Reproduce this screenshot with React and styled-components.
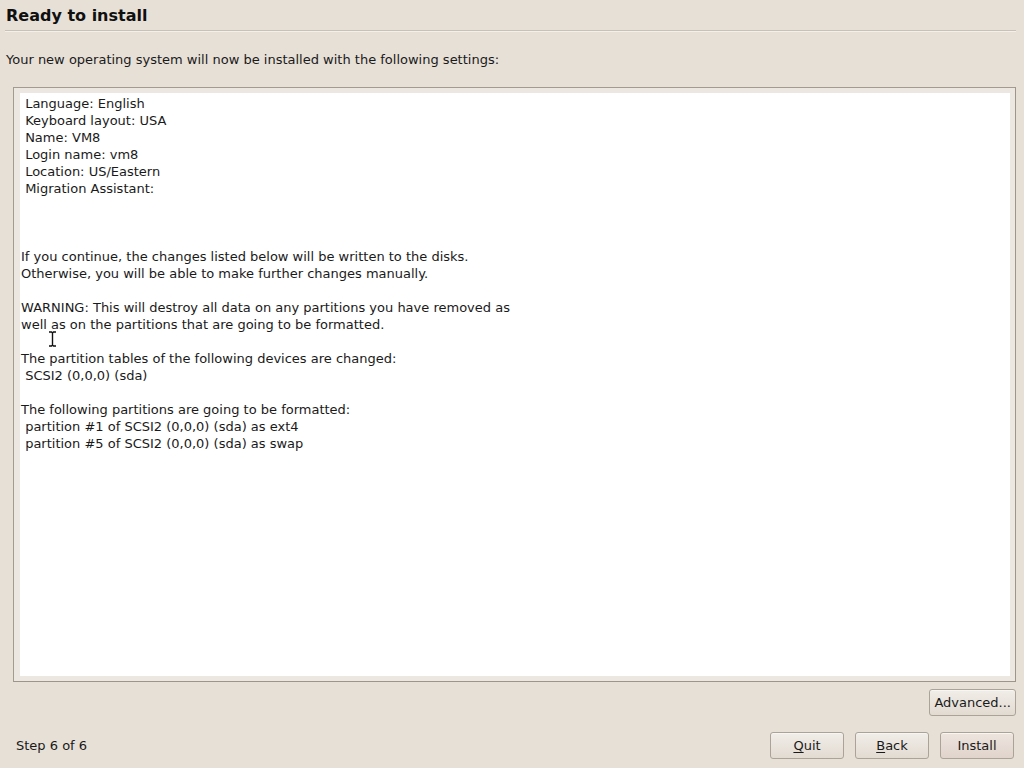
import React from "react";
import styled, { createGlobalStyle } from "styled-components";

const GlobalStyle = createGlobalStyle`
  html, body {
    margin: 0;
    padding: 0;
    background: #e7e0d7;
  }
  body {
    font-family: "DejaVu Sans", "Liberation Sans", sans-serif;
    color: #1a1a1a;
  }
`;

const Window = styled.div`
  width: 1024px;
  height: 768px;
  box-sizing: border-box;
  background: #e7e0d7;
  display: flex;
  flex-direction: column;
  position: relative;
  overflow: hidden;
`;

const Header = styled.div`
  margin: 0 8px 0 5px;
  padding: 7px 0 5px 1px;
  border-bottom: 1px solid #c9c1b6;
  box-shadow: 0 1px 0 #f3efea;
`;

const Title = styled.h1`
  margin: 0;
  font-size: 16px;
  font-weight: bold;
  line-height: 18px;
  color: #101010;
`;

const Intro = styled.p`
  margin: 20px 0 0 6px;
  font-size: 13px;
  line-height: 17px;
`;

const Frame = styled.div`
  margin: 19px 8px 0 13px;
  height: 595px;
  box-sizing: border-box;
  border: 1px solid #a49b90;
  border-right-color: #9d948a;
  border-bottom-color: #9d948a;
  padding: 5px 5px 5px 6px;
  background: #ece7e1;
  display: flex;
`;

const TextArea = styled.div`
  flex: 1;
  background: #ffffff;
  padding: 2px 1px;
  font-size: 13px;
  line-height: 17px;
  white-space: pre;
  color: #1a1a1a;
`;

const ButtonRow = styled.div`
  display: flex;
  align-items: center;
  justify-content: ${(p) => (p.$spread ? "space-between" : "flex-end")};
  padding: ${(p) => p.$pad};
`;

const Buttons = styled.div`
  display: flex;
  gap: 11px;
`;

const Button = styled.button`
  font-family: "DejaVu Sans", "Liberation Sans", sans-serif;
  font-size: 13px;
  color: #1a1a1a;
  height: 27px;
  min-width: ${(p) => p.$w || 74}px;
  padding: 0 4px;
  border: 1px solid #aba398;
  border-radius: 3px;
  background: ${(p) =>
    p.$default
      ? "linear-gradient(#eee5df, #e0d4cc)"
      : "linear-gradient(#f1ede8, #e2dbd2)"};
  box-shadow: inset 0 1px 0 #f8f6f3;
  cursor: default;
`;

const Mnemonic = styled.span`
  text-decoration: underline;
  text-underline-offset: 2px;
`;

const StepLabel = styled.span`
  font-size: 13px;
  line-height: 17px;
`;

const Cursor = styled.svg`
  position: absolute;
  left: 48px;
  top: 331px;
`;

const summary = ` Language: English
 Keyboard layout: USA
 Name: VM8
 Login name: vm8
 Location: US/Eastern
 Migration Assistant:



If you continue, the changes listed below will be written to the disks.
Otherwise, you will be able to make further changes manually.

WARNING: This will destroy all data on any partitions you have removed as
well as on the partitions that are going to be formatted.

The partition tables of the following devices are changed:
 SCSI2 (0,0,0) (sda)

The following partitions are going to be formatted:
 partition #1 of SCSI2 (0,0,0) (sda) as ext4
 partition #5 of SCSI2 (0,0,0) (sda) as swap`;

export default function App() {
  return (
    <Window>
      <GlobalStyle />
      <Header>
        <Title>Ready to install</Title>
      </Header>
      <Intro>
        Your new operating system will now be installed with the following
        settings:
      </Intro>
      <Frame>
        <TextArea>{summary}</TextArea>
      </Frame>
      <ButtonRow $pad="7px 8px 0 0">
        <Button $w={86}>Advanced...</Button>
      </ButtonRow>
      <ButtonRow $spread $pad="16px 10px 0 16px">
        <StepLabel>Step 6 of 6</StepLabel>
        <Buttons>
          <Button>
            <Mnemonic>Q</Mnemonic>uit
          </Button>
          <Button>
            <Mnemonic>B</Mnemonic>ack
          </Button>
          <Button $default>Install</Button>
        </Buttons>
      </ButtonRow>
      <Cursor width="9" height="16" viewBox="0 0 9 16">
        <path
          d="M1 1h2.5l1 1 1-1H8M4.5 2v12M1 15h2.5l1-1 1 1H8"
          fill="none"
          stroke="#f4f4f4"
          strokeWidth="3"
        />
        <path
          d="M1 1h2.5l1 1 1-1H8M4.5 2v12M1 15h2.5l1-1 1 1H8"
          fill="none"
          stroke="#111"
          strokeWidth="1.3"
        />
      </Cursor>
    </Window>
  );
}
